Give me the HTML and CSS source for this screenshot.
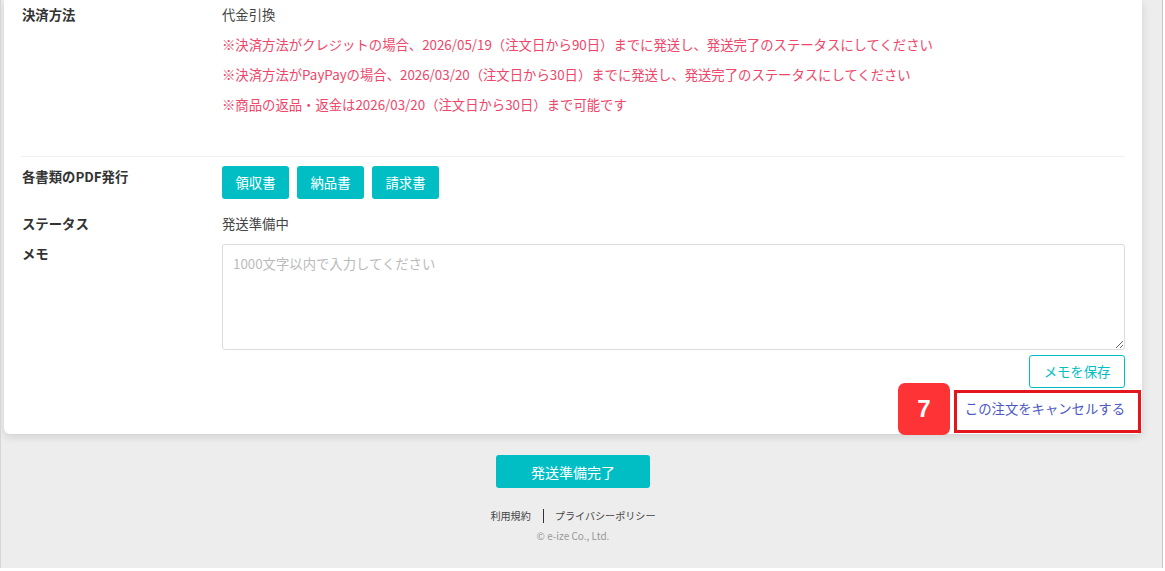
FILE: index.html
```html
<!DOCTYPE html>
<html lang="ja">
<head>
    <meta charset="UTF-8">
    <meta name="viewport" content="width=device-width, initial-scale=1.0">
    <title>注文詳細</title>
    <link rel="stylesheet" href="styles.css">
</head>
<body>
    <div class="page">
        <div class="card">
            <div class="row row-payment">
                <div class="label">決済方法</div>
                <div class="value">
                    <div>代金引換</div>
                    <div class="note">※決済方法がクレジットの場合、2026/05/19（注文日から90日）までに発送し、発送完了のステータスにしてください</div>
                    <div class="note">※決済方法がPayPayの場合、2026/03/20（注文日から30日）までに発送し、発送完了のステータスにしてください</div>
                    <div class="note">※商品の返品・返金は2026/03/20（注文日から30日）まで可能です</div>
                </div>
            </div>
            <div class="divider"></div>
            <div class="row row-pdf">
                <div class="label">各書類のPDF発行</div>
                <div class="value doc-buttons">
                    <button class="btn">領収書</button>
                    <button class="btn">納品書</button>
                    <button class="btn">請求書</button>
                </div>
            </div>
            <div class="row row-status">
                <div class="label">ステータス</div>
                <div class="value">発送準備中</div>
            </div>
            <div class="row row-memo">
                <div class="label">メモ</div>
                <div class="value">
                    <textarea class="memo" placeholder="1000文字以内で入力してください"></textarea>
                    <div class="memo-actions">
                        <button class="btn-outline">メモを保存</button>
                    </div>
                </div>
            </div>
            <div class="cancel-row">
                <a class="cancel-link" href="#">
                    この注文をキャンセルする
                    <span class="mark-box"></span>
                    <span class="mark-num">7</span>
                </a>
            </div>
        </div>

        <div class="bottom">
            <button class="btn btn-done">発送準備完了</button>
            <div class="footer-links">
                <a href="#">利用規約</a>
                <span class="sep"></span>
                <a href="#">プライバシーポリシー</a>
            </div>
            <div class="copy">© e-ize Co., Ltd.</div>
        </div>
    </div>
</body>
</html>
```

FILE: styles.css
```css
body {
    margin: 0;
    background: #fff;
    font-family: "Noto Sans CJK JP", "Noto Sans", sans-serif;
    font-size: 13.35px;
    color: #444;
}
.page {
    width: 1163px;
    height: 568px;
    overflow: hidden;
    background: #ededed;
    border-left: 1px solid #d6d6d6;
    border-right: 1px solid #c6c6c6;
    padding-left: 3px;
    box-sizing: border-box;
}
.card {
    width: 1138px;
    background: #fff;
    border-radius: 0 0 6px 6px;
    box-shadow: 0 3px 8px rgba(0, 0, 0, 0.12);
    padding: 0 17px 15px 17px;
    box-sizing: border-box;
}
.row {
    display: grid;
    grid-template-columns: 201px 1fr;
}
.label {
    font-weight: bold;
    color: #333;
    padding-left: 1px;
}
.row-payment {
    line-height: 30px;
    padding-bottom: 36px;
}
.note {
    color: #f0466a;
}
.divider {
    height: 1px;
    background: #f1f1f1;
}
.row-pdf {
    margin-top: 9px;
    line-height: 22px;
}
.doc-buttons {
    display: flex;
    gap: 8px;
}
.btn {
    font-family: inherit;
    font-size: 13.35px;
    background: #00bec4;
    color: #fff;
    border: none;
    border-radius: 3px;
    height: 33px;
    width: 67px;
    padding: 0;
    cursor: pointer;
}
.row-status {
    margin-top: 15px;
    line-height: 20px;
}
.row-memo {
    margin-top: 10px;
    line-height: 20px;
}
.memo {
    display: block;
    width: 100%;
    height: 106px;
    box-sizing: border-box;
    border: 1px solid #dcdcdc;
    border-radius: 3px;
    padding: 8px 10px;
    font-family: inherit;
    font-size: 13.35px;
    line-height: 22px;
    color: #444;
}
.memo::placeholder {
    color: #bbb;
}
.memo-actions {
    display: flex;
    justify-content: flex-end;
    margin-top: 5px;
}
.btn-outline {
    font-family: inherit;
    font-size: 13.35px;
    background: #fff;
    color: #00bec4;
    border: 1px solid #00bec4;
    border-radius: 3px;
    width: 96px;
    height: 33px;
    padding: 0;
}
.cancel-row {
    display: flex;
    justify-content: flex-end;
    margin-top: 11px;
    line-height: 20px;
}
.cancel-link {
    position: relative;
    color: #4b57c4;
    text-decoration: none;
}
/* annotation overlay */
.mark-box {
    position: absolute;
    left: -11px;
    right: -16px;
    top: -9px;
    bottom: -14px;
    border: 3px solid #e2161c;
}
.mark-num {
    position: absolute;
    left: -67px;
    top: -16px;
    width: 52px;
    height: 52px;
    border-radius: 7px;
    background: #fd3336;
    color: #fff;
    font-family: "Liberation Sans", Arial, sans-serif;
    font-weight: bold;
    font-size: 24px;
    line-height: 52px;
    text-align: center;
}
.bottom {
    width: 1138px;
    display: flex;
    flex-direction: column;
    align-items: center;
    padding-top: 21px;
}
.btn-done {
    width: 154px;
    font-size: 14px;
}
.footer-links {
    display: flex;
    align-items: center;
    margin-top: 18px;
    font-size: 10.1px;
    line-height: 20px;
}
.footer-links a {
    color: #444;
    text-decoration: none;
}
.sep {
    width: 1px;
    height: 14px;
    background: #333;
    margin: 0 11px 0 12px;
}
.copy {
    margin-top: 2px;
    font-size: 10px;
    color: #999;
}
```
